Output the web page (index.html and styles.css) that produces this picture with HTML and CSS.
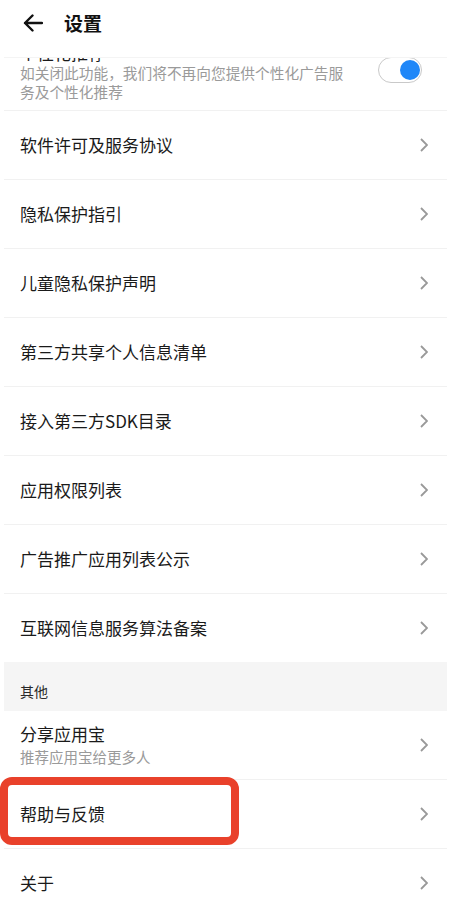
FILE: index.html
```html
<!DOCTYPE html>
<html lang="zh-CN">
<head>
<meta charset="utf-8">
<title>设置</title>
<link rel="stylesheet" href="styles.css">
</head>
<body>
<div class="page">
  <header class="header">
    <svg class="back" width="20" height="18" viewBox="0 0 20 18">
      <path d="M19 9 H2 M9.5 1.5 L2 9 L9.5 16.5" fill="none" stroke="#111" stroke-width="2.4" stroke-linecap="round" stroke-linejoin="round"/>
    </svg>
    <h1 class="title">设置</h1>
  </header>
  <div class="list">
    <div class="row row-first">
      <div class="text-block">
        <div class="item-title first-title">个性化推荐</div>
        <div class="desc">如关闭此功能，我们将不再向您提供个性化广告服务及个性化推荐</div>
      </div>
      <div class="toggle"><span class="knob"></span></div>
    </div>
    <div class="row"><span class="item-title">软件许可及服务协议</span><svg class="chev" width="8" height="14" viewBox="0 0 8 14"><path d="M1 1 L7 7 L1 13" fill="none" stroke="#999" stroke-width="1.8"/></svg></div>
    <div class="row"><span class="item-title">隐私保护指引</span><svg class="chev" width="8" height="14" viewBox="0 0 8 14"><path d="M1 1 L7 7 L1 13" fill="none" stroke="#999" stroke-width="1.8"/></svg></div>
    <div class="row"><span class="item-title">儿童隐私保护声明</span><svg class="chev" width="8" height="14" viewBox="0 0 8 14"><path d="M1 1 L7 7 L1 13" fill="none" stroke="#999" stroke-width="1.8"/></svg></div>
    <div class="row"><span class="item-title">第三方共享个人信息清单</span><svg class="chev" width="8" height="14" viewBox="0 0 8 14"><path d="M1 1 L7 7 L1 13" fill="none" stroke="#999" stroke-width="1.8"/></svg></div>
    <div class="row"><span class="item-title">接入第三方SDK目录</span><svg class="chev" width="8" height="14" viewBox="0 0 8 14"><path d="M1 1 L7 7 L1 13" fill="none" stroke="#999" stroke-width="1.8"/></svg></div>
    <div class="row"><span class="item-title">应用权限列表</span><svg class="chev" width="8" height="14" viewBox="0 0 8 14"><path d="M1 1 L7 7 L1 13" fill="none" stroke="#999" stroke-width="1.8"/></svg></div>
    <div class="row"><span class="item-title">广告推广应用列表公示</span><svg class="chev" width="8" height="14" viewBox="0 0 8 14"><path d="M1 1 L7 7 L1 13" fill="none" stroke="#999" stroke-width="1.8"/></svg></div>
    <div class="row row-last"><span class="item-title">互联网信息服务算法备案</span><svg class="chev" width="8" height="14" viewBox="0 0 8 14"><path d="M1 1 L7 7 L1 13" fill="none" stroke="#999" stroke-width="1.8"/></svg></div>
    <div class="section">其他</div>
    <div class="row row-sub">
      <div class="text-block">
        <div class="item-title">分享应用宝</div>
        <div class="sub">推荐应用宝给更多人</div>
      </div>
      <svg class="chev" width="8" height="14" viewBox="0 0 8 14"><path d="M1 1 L7 7 L1 13" fill="none" stroke="#999" stroke-width="1.8"/></svg>
    </div>
    <div class="row row-help"><span class="highlight"></span><span class="item-title">帮助与反馈</span><svg class="chev" width="8" height="14" viewBox="0 0 8 14"><path d="M1 1 L7 7 L1 13" fill="none" stroke="#999" stroke-width="1.8"/></svg></div>
    <div class="row"><span class="item-title">关于</span><svg class="chev" width="8" height="14" viewBox="0 0 8 14"><path d="M1 1 L7 7 L1 13" fill="none" stroke="#999" stroke-width="1.8"/></svg></div>
  </div>
</div>
</body>
</html>
```

FILE: styles.css
```css
* { box-sizing: border-box; }
html, body { margin: 0; padding: 0; background: #fff; }
body {
  font-family: "Noto Sans CJK SC", "Noto Sans", sans-serif;
  color: #1a1a1a;
}
.page {
  width: 449px;
  height: 917px;
  overflow: hidden;
  background: #fff;
}
.header {
  height: 58px;
  display: flex;
  align-items: center;
  padding: 0 0 11px 19px;
  border-bottom: 1px solid #f4f4f4;
  margin: 0 2px 0 4px;
}
.back { display: block; }
.title {
  margin: 0 0 0 21px;
  font-size: 19px;
  font-weight: 700;
  line-height: 24px;
  color: #111;
}
.list {
  overflow: hidden;
  height: 859px;
}
.row {
  position: relative;
  display: flex;
  align-items: center;
  justify-content: space-between;
  height: 69px;
  margin: 0 2px 0 4px;
  padding: 0 19px 0 16px;
  border-bottom: 1px solid #f1f1f1;
}
.item-title {
  font-size: 17px;
  line-height: 22px;
  color: #1a1a1a;
}
.chev { display: block; flex: none; }
.row-first {
  height: auto;
  align-items: flex-start;
  margin-top: -15px;
  padding: 0 25px 9px 16px;
}
.first-title { line-height: 20px; }
.desc {
  width: 330px;
  font-size: 14.7px;
  line-height: 19px;
  color: #9a9a9a;
}
.toggle {
  position: relative;
  flex: none;
  width: 44px;
  height: 26px;
  margin-top: 14px;
  border: 1.5px solid #c9c9c9;
  border-radius: 13px;
  background: #fff;
  display: flex;
  align-items: center;
  justify-content: flex-end;
  padding-right: 1.5px;
}
.knob {
  display: block;
  width: 20px;
  height: 20px;
  border-radius: 50%;
  background: #1f87f8;
}
.row-last { border-bottom: none; height: 68px; }
.section {
  height: 49px;
  margin: 0 2px 0 4px;
  background: #f5f5f5;
  padding: 18px 0 0 16px;
  font-size: 14px;
  line-height: 22px;
  color: #2a2a2a;
}
.sub {
  margin-top: 2px;
  font-size: 14.5px;
  line-height: 20px;
  color: #9a9a9a;
}
.highlight {
  position: absolute;
  left: -4px;
  top: -3px;
  width: 239px;
  height: 68px;
  border: 8px solid #e9412b;
  border-radius: 12px;
  pointer-events: none;
}
```
